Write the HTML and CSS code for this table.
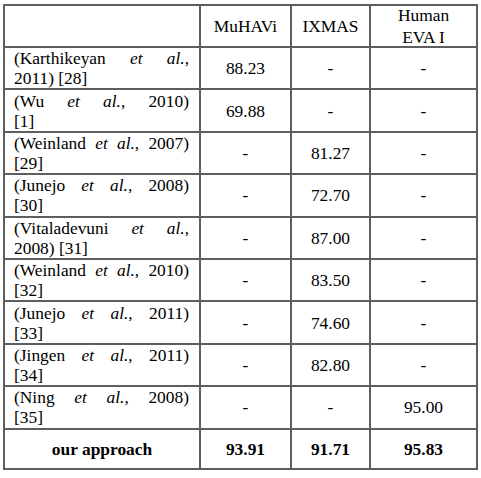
FILE: index.html
```html
<!DOCTYPE html>
<html lang="en">
  <head>
    <meta charset="UTF-8" />
    <meta name="viewport" content="width=device-width, initial-scale=1.0" />
    <title>Results Comparison</title>
    <link rel="stylesheet" href="styles.css">
  </head>
  <body>
    <table class="results">
      <colgroup>
        <col class="c-method" />
        <col class="c-muhavi" />
        <col class="c-ixmas" />
        <col class="c-human" />
      </colgroup>
      <tr class="head">
        <th></th>
        <th>MuHAVi</th>
        <th>IXMAS</th>
        <th><div class="two">Human<br />EVA I</div></th>
      </tr>
      <tr>
        <td class="ref">
          <span class="ln j">(Karthikeyan <i>et al.</i>,</span>
          <span class="ln">2011) [28]</span>
        </td>
        <td>88.23</td>
        <td>-</td>
        <td>-</td>
      </tr>
      <tr>
        <td class="ref">
          <span class="ln j">(Wu <i>et al.</i>, 2010)</span>
          <span class="ln">[1]</span>
        </td>
        <td>69.88</td>
        <td>-</td>
        <td>-</td>
      </tr>
      <tr>
        <td class="ref">
          <span class="ln j">(Weinland <i>et al.</i>, 2007)</span>
          <span class="ln">[29]</span>
        </td>
        <td>-</td>
        <td>81.27</td>
        <td>-</td>
      </tr>
      <tr>
        <td class="ref">
          <span class="ln j">(Junejo <i>et al.</i>, 2008)</span>
          <span class="ln">[30]</span>
        </td>
        <td>-</td>
        <td>72.70</td>
        <td>-</td>
      </tr>
      <tr>
        <td class="ref">
          <span class="ln j">(Vitaladevuni <i>et al.</i>,</span>
          <span class="ln">2008) [31]</span>
        </td>
        <td>-</td>
        <td>87.00</td>
        <td>-</td>
      </tr>
      <tr>
        <td class="ref">
          <span class="ln j">(Weinland <i>et al.</i>, 2010)</span>
          <span class="ln">[32]</span>
        </td>
        <td>-</td>
        <td>83.50</td>
        <td>-</td>
      </tr>
      <tr>
        <td class="ref">
          <span class="ln j">(Junejo <i>et al.</i>, 2011)</span>
          <span class="ln">[33]</span>
        </td>
        <td>-</td>
        <td>74.60</td>
        <td>-</td>
      </tr>
      <tr>
        <td class="ref">
          <span class="ln j">(Jingen <i>et al.</i>, 2011)</span>
          <span class="ln">[34]</span>
        </td>
        <td>-</td>
        <td>82.80</td>
        <td>-</td>
      </tr>
      <tr>
        <td class="ref">
          <span class="ln j">(Ning <i>et al.</i>, 2008)</span>
          <span class="ln">[35]</span>
        </td>
        <td>-</td>
        <td>-</td>
        <td>95.00</td>
      </tr>
      <tr class="ours">
        <td>our approach</td>
        <td>93.91</td>
        <td>91.71</td>
        <td>95.83</td>
      </tr>
    </table>
  </body>
</html>
```

FILE: styles.css
```css
body {
  margin: 0;
  padding: 4px 0 0 3px;
  background: #fff;
  font-family: "Liberation Serif", "Times New Roman", serif;
  color: #000;
}
.results {
  border-collapse: collapse;
  table-layout: fixed;
  width: 473px;
  font-size: 17.4px;
}
.c-method {
  width: 196px;
}
.c-muhavi {
  width: 91px;
}
.c-ixmas {
  width: 79px;
}
.c-human {
  width: 107px;
}
.results th,
.results td {
  border: 2px solid #5e5e5e;
  padding: 0;
  text-align: center;
  vertical-align: middle;
  line-height: 20px;
}
.results th {
  font-weight: normal;
}
.results tr {
  height: 42.4px;
}
.results .head {
  height: 42px;
}
.two {
  line-height: 22px;
  margin: -2px 0 -2px;
}
.results td.ref {
  text-align: left;
  padding: 0 10px 0 9px;
}
.ln {
  display: block;
}
.j {
  text-align: justify;
  text-align-last: justify;
}
.ours {
  font-weight: bold;
}
.results .ours {
  height: 40px;
}
```
